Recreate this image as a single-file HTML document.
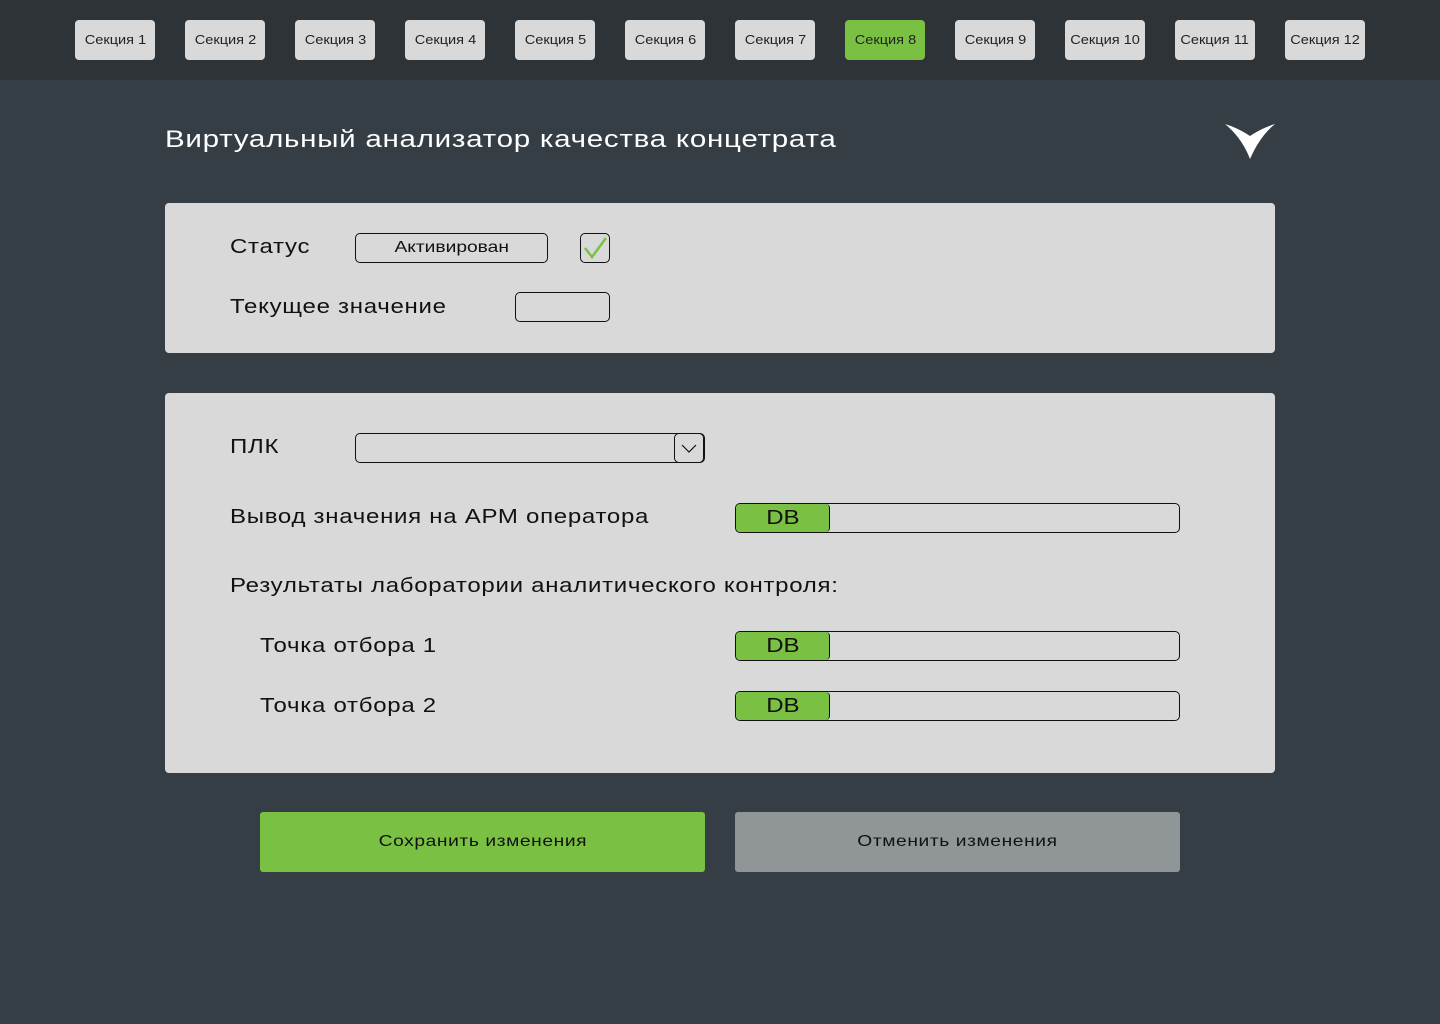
<!DOCTYPE html>
<html><head><meta charset="utf-8"><style>
*{box-sizing:border-box;margin:0;padding:0}
body{width:1440px;height:1024px;background:#343e44;font-family:"Liberation Sans",sans-serif;position:relative;overflow:hidden;color:#111}
.top{position:absolute;left:0;top:0;width:1440px;height:80px;background:#2d3337}
.tab{position:absolute;top:20px;width:80px;height:40px;background:#d9d9d9;border-radius:4px;font-size:13px;line-height:40px;text-align:center;color:#222;white-space:nowrap}
.tab span{display:inline-block;transform:scaleX(1.12)}
.tab.on{background:#7ac143}
.a{position:absolute}
.w{display:inline-block;transform:scaleX(1.2);transform-origin:0 50%;white-space:nowrap}
.c{display:inline-block;transform:scaleX(1.2);white-space:nowrap}
h1{position:absolute;left:165px;top:126px;font-size:24px;font-weight:normal;color:#fff;letter-spacing:0.6px}
.panel{position:absolute;left:165px;width:1110px;background:#d9d9d9;border-radius:4px}
.lbl{position:absolute;font-size:20px;letter-spacing:0.6px;color:#111}
.box{position:absolute;border:1px solid #111;border-radius:5px}
.db{position:absolute;left:735px;width:445px;height:30px;border:1px solid #111;border-radius:5px;overflow:hidden}
.db span{position:absolute;left:0;top:0;width:94px;height:28px;background:#7ac143;border-right:1px solid #111;border-radius:4px;text-align:center;font-size:20px;line-height:28px}
.btn{position:absolute;top:812px;width:445px;height:60px;border-radius:3px;text-align:center;line-height:60px;font-size:16px;letter-spacing:0.5px}
</style></head><body>
<div class="top"></div>
<div class="tab" style="left:75px"><span>Секция 1</span></div>
<div class="tab" style="left:185px"><span>Секция 2</span></div>
<div class="tab" style="left:295px"><span>Секция 3</span></div>
<div class="tab" style="left:405px"><span>Секция 4</span></div>
<div class="tab" style="left:515px"><span>Секция 5</span></div>
<div class="tab" style="left:625px"><span>Секция 6</span></div>
<div class="tab" style="left:735px"><span>Секция 7</span></div>
<div class="tab on" style="left:845px"><span>Секция 8</span></div>
<div class="tab" style="left:955px"><span>Секция 9</span></div>
<div class="tab" style="left:1065px"><span>Секция 10</span></div>
<div class="tab" style="left:1175px"><span>Секция 11</span></div>
<div class="tab" style="left:1285px"><span>Секция 12</span></div>
<h1><span class="w" style="transform:scaleX(1.23)">Виртуальный анализатор качества концетрата</span></h1>
<svg class="a" style="left:1224px;top:122px" width="52" height="38" viewBox="0 0 52 38"><path d="M1 2 Q14 6 26 14 Q38 6 51 2 Q36 14 26 37 Q18 16 1 2Z" fill="#fff"/></svg>
<div class="panel" style="top:203px;height:150px"></div>
<div class="lbl" style="left:230px;top:236px"><span class="w">Статус</span></div>
<div class="box" style="left:355px;top:233px;width:193px;height:30px;text-align:center;font-size:16px;line-height:27px"><span class="c">Активирован</span></div>
<div class="box" style="left:580px;top:233px;width:30px;height:30px"><svg width="28" height="28" viewBox="0 0 28 28"><path d="M4 14 L11 23 L25 4" stroke="#7ac143" stroke-width="2.5" fill="none"/></svg></div>
<div class="lbl" style="left:230px;top:296px"><span class="w">Текущее значение</span></div>
<div class="box" style="left:515px;top:292px;width:95px;height:30px"></div>
<div class="panel" style="top:393px;height:380px"></div>
<div class="lbl" style="left:230px;top:436px"><span class="w">ПЛК</span></div>
<div class="box" style="left:355px;top:433px;width:350px;height:30px"><div style="position:absolute;right:0;top:-1px;width:30px;height:30px;border:1px solid #111;border-radius:5px"><svg width="28" height="28" viewBox="0 0 28 28"><path d="M7 11 L14 18 L21 11" stroke="#111" stroke-width="1.2" fill="none"/></svg></div></div>
<div class="lbl" style="left:230px;top:506px"><span class="w">Вывод значения на АРМ оператора</span></div>
<div class="db" style="top:503px"><span><i class="c" style="font-style:normal">DB</i></span></div>
<div class="lbl" style="left:230px;top:575px"><span class="w">Результаты лаборатории аналитического контроля:</span></div>
<div class="lbl" style="left:260px;top:635px"><span class="w">Точка отбора 1</span></div>
<div class="db" style="top:631px"><span><i class="c" style="font-style:normal">DB</i></span></div>
<div class="lbl" style="left:260px;top:695px"><span class="w">Точка отбора 2</span></div>
<div class="db" style="top:691px"><span><i class="c" style="font-style:normal">DB</i></span></div>
<div class="btn" style="left:260px;background:#7ac143"><span class="c">Сохранить изменения</span></div>
<div class="btn" style="left:735px;background:#909598"><span class="c">Отменить изменения</span></div>
</body></html>
